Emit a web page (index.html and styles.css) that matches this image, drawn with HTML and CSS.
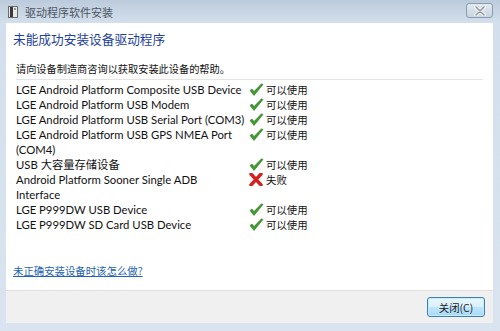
FILE: index.html
```html
<!DOCTYPE html>
<html lang="zh-CN">
<head>
  <meta charset="UTF-8">
  <title>驱动程序软件安装</title>
  <link rel="stylesheet" href="styles.css">
</head>
<body>
  <div class="window">
    <!-- Title bar -->
    <div class="titlebar">
      <svg class="app-icon" width="10" height="12" viewBox="0 0 10 12">
        <rect x="0.5" y="0.5" width="9" height="11" fill="#e8e8e8" stroke="#6b6b6b"/>
        <rect x="2" y="1" width="3" height="10" fill="#3a3a3a"/>
        <rect x="6" y="2" width="2" height="2" fill="#9a9a9a"/>
      </svg>
      <span class="title">驱动程序软件安装</span>
      <button class="close-btn">
        <svg width="12" height="10" viewBox="0 0 12 10">
          <path d="M2 1 L10 9 M10 1 L2 9" stroke="#fff" stroke-width="3.4" stroke-linecap="round"/>
          <path d="M2 1 L10 9 M10 1 L2 9" stroke="#8d97a5" stroke-width="1.6" stroke-linecap="round"/>
        </svg>
      </button>
    </div>

    <!-- Client area -->
    <div class="client">
      <div class="content">
        <h1 class="heading">未能成功安装设备驱动程序</h1>
        <p class="advice">请向设备制造商咨询以获取安装此设备的帮助。</p>
        <div class="device-list">
          <div class="device">LGE Android Platform Composite USB Device</div>
          <div class="status ok"><span class="mark"></span>可以使用</div>
          <div class="device">LGE Android Platform USB Modem</div>
          <div class="status ok"><span class="mark"></span>可以使用</div>
          <div class="device">LGE Android Platform USB Serial Port (COM3)</div>
          <div class="status ok"><span class="mark"></span>可以使用</div>
          <div class="device">LGE Android Platform USB GPS NMEA Port (COM4)</div>
          <div class="status ok"><span class="mark"></span>可以使用</div>
          <div class="device">USB 大容量存储设备</div>
          <div class="status ok"><span class="mark"></span>可以使用</div>
          <div class="device">Android Platform Sooner Single ADB<br>Interface</div>
          <div class="status fail"><span class="mark"></span>失败</div>
          <div class="device">LGE P999DW USB Device</div>
          <div class="status ok"><span class="mark"></span>可以使用</div>
          <div class="device">LGE P999DW SD Card USB Device</div>
          <div class="status ok"><span class="mark"></span>可以使用</div>
        </div>
        <a class="help-link" href="#">未正确安装设备时该怎么做?</a>
      </div>
      <div class="footer">
        <button class="btn">关闭(C)</button>
      </div>
    </div>
  </div>

  <script>
    // Draw the status icons (check or cross) into each row
    const checkSvg = '<svg width="15" height="14" viewBox="0 0 15 14"><path d="M1 7.5 L5 12.5 L14 1.5 L12.5 0.8 L5 8.5 L3 6 Z" fill="#3f9b2f" stroke="#2e7d22" stroke-width="0.6" stroke-linejoin="round"/></svg>';
    const crossSvg = '<svg width="14" height="13" viewBox="0 0 14 13"><path d="M2 1 L12 12 M12 1 L2 12" stroke="#d32020" stroke-width="3.4" stroke-linecap="round"/></svg>';
    document.querySelectorAll('.status').forEach(function (el) {
      el.querySelector('.mark').innerHTML = el.classList.contains('fail') ? crossSvg : checkSvg;
    });
  </script>
</body>
</html>
```

FILE: styles.css
```css
/* Global */
body {
  margin: 0;
  padding: 0;
  font-family: Lato, "Noto Sans CJK SC", sans-serif;
}

/* Window frame */
.window {
  width: 500px;
  height: 331px;
  box-sizing: border-box;
  display: flex;
  flex-direction: column;
  background: linear-gradient(to bottom, #bccbdc 0px, #d3dfec 23px, #d9e4f0 100%);
  padding: 0 7px 8px 6px;
  overflow: hidden;
}

.titlebar {
  height: 23px;
  flex-shrink: 0;
  display: flex;
  align-items: center;
  padding-left: 2px;
}

.app-icon {
  margin-right: 7px;
}

.title {
  font-family: "Noto Sans CJK SC", sans-serif;
  font-size: 11px;
  color: #4b5563;
  flex: 1;
}

.close-btn {
  width: 27px;
  height: 15px;
  margin-top: -2px;
  padding: 0;
  border: 1px solid #8c9aae;
  border-radius: 3px;
  background: linear-gradient(to bottom, #e2e9f1, #c9d5e3);
  display: flex;
  align-items: center;
  justify-content: center;
}

/* Client area */
.client {
  flex: 1;
  min-height: 0;
  display: flex;
  flex-direction: column;
  background-color: #fff;
}

.content {
  flex: 1;
  min-height: 0;
  padding: 7px 10px 0 7px;
}

.heading {
  margin: 0;
  font-family: "Noto Sans CJK SC", sans-serif;
  font-weight: normal;
  font-size: 12.7px;
  line-height: 18px;
  color: #1e3f9a;
}

.advice {
  margin: 14px 0 0 3px;
  font-family: "Noto Sans CJK SC", sans-serif;
  font-size: 10.2px;
  line-height: 14px;
  color: #111;
  padding-bottom: 3px;
  border-bottom: 1px solid #e4e4e4;
}

/* Device list */
.device-list {
  display: grid;
  grid-template-columns: 233px auto;
  margin: 2px 0 0 3px;
  font-size: 11.3px;
  line-height: 15px;
  color: #111;
}

.status {
  display: flex;
  align-items: center;
  height: 15px;
  font-family: "Noto Sans CJK SC", sans-serif;
  font-size: 10.4px;
}

.mark {
  width: 17px;
  height: 15px;
  display: flex;
  align-items: center;
}

.help-link {
  display: inline-block;
  margin-top: 31px;
  font-family: "Noto Sans CJK SC", sans-serif;
  font-size: 10.4px;
  color: #2563b0;
}

/* Footer with the close button */
.footer {
  height: 32px;
  flex-shrink: 0;
  background-color: #f0f0f0;
  border-top: 1px solid #dfdfdf;
  display: flex;
  align-items: center;
  justify-content: flex-end;
  padding-right: 8px;
}

.btn {
  width: 58px;
  height: 20px;
  padding: 0;
  font-family: "Noto Sans CJK SC", sans-serif;
  font-size: 10.4px;
  color: #222;
  border: 1px solid #3c7fb1;
  border-radius: 3px;
  background: linear-gradient(to bottom, #eaf6fd 0%, #d9f0fc 50%, #bee6fd 51%, #a7d9f5 100%);
  box-shadow: inset 0 0 0 1px #c6ecff;
}
```
